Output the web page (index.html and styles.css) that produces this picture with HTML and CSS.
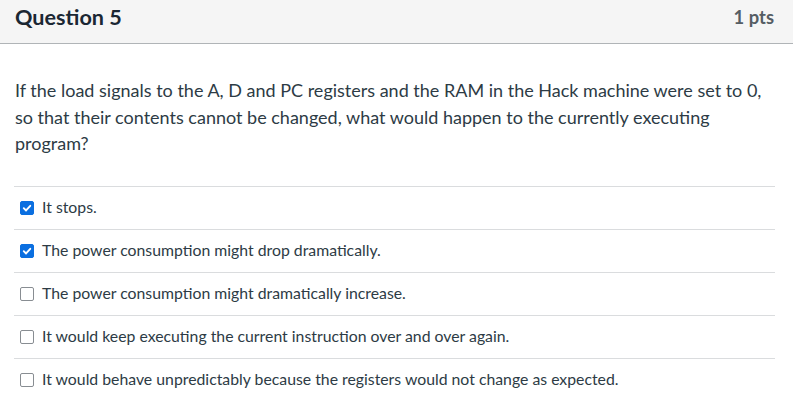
FILE: index.html
```html
<!DOCTYPE html>
<html>
<head>
<meta charset="utf-8">
<link rel="stylesheet" href="styles.css">
</head>
<body>
<div class="question">
  <div class="header">
    <div class="title">Question 5</div>
    <div class="pts">1 pts</div>
  </div>
  <div class="content">
    <p class="text">If the load signals to the A, D and PC registers and the RAM in the Hack machine were set to 0, so that their contents cannot be changed, what would happen to the currently executing program?</p>
    <div class="answers">
      <label class="answer"><span class="box checked"><svg viewBox="0 0 14 14" width="14" height="14"><path d="M3.2 7.2 L5.9 9.9 L10.8 4.4" fill="none" stroke="#fff" stroke-width="2.2" stroke-linecap="round" stroke-linejoin="round"/></svg></span><span class="label">It stops.</span></label>
      <label class="answer"><span class="box checked"><svg viewBox="0 0 14 14" width="14" height="14"><path d="M3.2 7.2 L5.9 9.9 L10.8 4.4" fill="none" stroke="#fff" stroke-width="2.2" stroke-linecap="round" stroke-linejoin="round"/></svg></span><span class="label">The power consumption might drop dramatically.</span></label>
      <label class="answer"><span class="box"></span><span class="label">The power consumption might dramatically increase.</span></label>
      <label class="answer"><span class="box"></span><span class="label">It would keep executing the current instruction over and over again.</span></label>
      <label class="answer"><span class="box"></span><span class="label">It would behave unpredictably because the registers would not change as expected.</span></label>
    </div>
  </div>
</div>
</body>
</html>
```
FILE: styles.css
```css
html, body {
  margin: 0;
  padding: 0;
  background: #fff;
}
body {
  font-family: Lato, "Open Sans", sans-serif;
  color: #2d3b45;
  width: 793px;
  height: 417px;
  overflow: hidden;
}
.header {
  height: 43px;
  background: #f5f5f5;
  border-bottom: 1px solid #b0b4b7;
  display: flex;
  align-items: center;
  justify-content: space-between;
  padding: 0 19px 0 15px;
}
.title {
  font-size: 21.6px;
  font-weight: 700;
  color: #1b2733;
  margin-top: -9px;
}
.pts {
  font-size: 18.4px;
  font-weight: 700;
  color: #555d64;
  margin-top: -9px;
}
.content {
  padding: 0 18px 0 14px;
}
.text {
  margin: 33px 0 0 1px;
  font-size: 18px;
  line-height: 26.5px;
}
.answers {
  margin-top: 29px;
}
.answer {
  display: flex;
  align-items: center;
  height: 42px;
  border-top: 1px solid #dadcde;
  padding-left: 6px;
  font-size: 15.8px;
}
.box {
  width: 12px;
  height: 12px;
  border: 1.5px solid #888d92;
  border-radius: 2px;
  box-sizing: content-box;
  display: flex;
  align-items: center;
  justify-content: center;
  margin-right: 8px;
  background: #fff;
}
.box.checked {
  background: #0b6fe0;
  border-color: #0b6fe0;
}
.box svg {
  display: block;
  width: 12px;
  height: 12px;
}
.label {
  line-height: 20px;
  margin-top: -2px;
}
```
